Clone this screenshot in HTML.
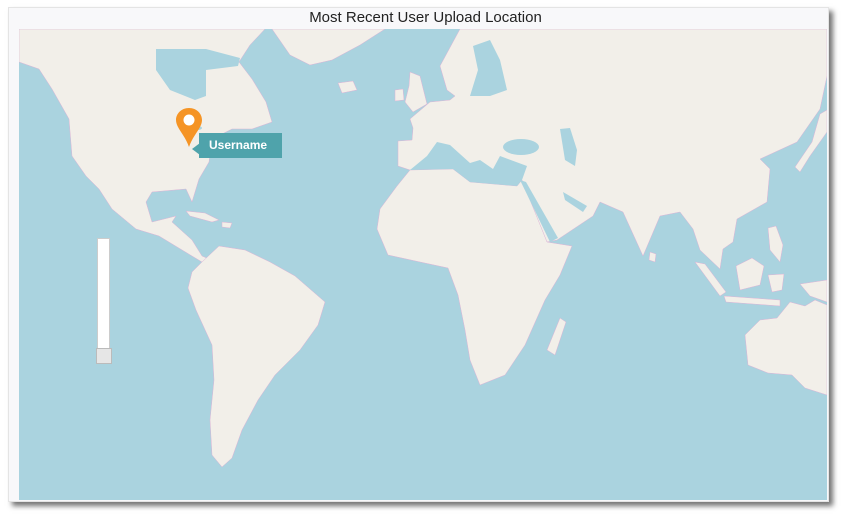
<!DOCTYPE html>
<html><head><style>
body{margin:0;width:843px;height:517px;background:#fff;overflow:hidden;font-family:"Liberation Sans",sans-serif}
.panel{position:absolute;left:8px;top:7px;width:819px;height:493px;background:#f8f8fa;box-shadow:4px 4px 5px rgba(0,0,0,.55);border:1px solid #e4e4e4}
.title{position:absolute;left:8px;top:9px;width:835px;text-align:center;font-size:15px;color:#222}
svg{position:absolute;left:19px;top:29px}
</style></head><body>
<div class="panel"></div>
<div class="title">Most Recent User Upload Location</div>
<svg width="808" height="471" viewBox="19 29 808 471">
<rect x="19" y="29" width="808" height="471" fill="#aad3df"/>
<g fill="#f2efe9" stroke="#dcb3d6" stroke-width=".5">
<!-- North America -->
<path d="M19 29 L265 29 L250 45 L239 62 L252 79 L266 102 L272 122 L252 129 L232 129 L212 139 L209 162 L199 179 L192 202 L186 189 L152 192 L146 202 L152 222 L176 216 L172 222 L192 240 L202 256 L209 259 L202 262 L192 256 L159 236 L136 229 L112 209 L99 189 L86 176 L72 156 L69 119 L52 89 L39 69 L19 62 Z"/>
<path d="M186 211 L205 213 L219 220 L212 222 L190 216 Z"/>
<path d="M222 222 L232 223 L230 228 L222 227 Z"/>
<!-- Greenland -->
<path d="M272 29 L385 29 L360 45 L332 60 L310 65 L290 55 Z"/>
<path d="M338 83 L353 81 L357 90 L342 93 Z"/>
<!-- South America -->
<path d="M202 262 L219 246 L245 250 L270 262 L295 276 L325 302 L318 325 L300 350 L275 375 L258 400 L242 430 L232 458 L222 467 L212 455 L210 420 L214 380 L212 345 L196 310 L188 288 L192 272 Z"/>
<!-- Eurasia -->
<path d="M460 29 L440 66 L447 90 L455 96 L450 100 L430 102 L410 119 L413 128 L412 140 L398 141 L398 166 L410 170 L525 170 L520 182 L547 242 L557 240 L593 216 L600 202 L623 212 L643 256 L660 216 L680 212 L693 229 L700 250 L720 269 L723 249 L733 242 L737 219 L767 202 L770 169 L760 159 L797 142 L820 109 L827 76 L827 29 Z"/>
<!-- Britain / Ireland -->
<path d="M410 72 L420 76 L427 104 L413 112 L405 102 L409 86 Z"/>
<path d="M395 90 L403 89 L404 100 L395 101 Z"/>
<!-- Africa -->
<path d="M410 170 L453 169 L470 182 L517 186 L522 180 L547 242 L572 246 L560 275 L545 300 L525 345 L505 375 L480 385 L470 360 L465 330 L458 295 L448 268 L420 262 L388 255 L377 229 L380 209 L397 186 Z"/>
<path d="M560 318 L566 322 L555 355 L547 350 Z"/>
<!-- Asia islands -->
<path d="M795 167 L812 142 L820 114 L827 110 L827 132 L810 156 L800 172 Z"/>
<path d="M650 252 L656 254 L655 262 L649 260 Z"/>
<path d="M695 262 L705 264 L726 292 L720 296 Z"/>
<path d="M724 296 L780 300 L780 306 L726 302 Z"/>
<path d="M736 266 L752 258 L764 266 L760 285 L740 290 Z"/>
<path d="M768 228 L776 226 L783 245 L780 262 L770 250 Z"/>
<path d="M768 275 L784 274 L782 290 L772 292 Z"/>
<path d="M800 284 L827 280 L827 302 L810 296 Z"/>
<!-- Australia -->
<path d="M745 335 L760 320 L777 318 L790 302 L805 306 L815 300 L827 305 L827 395 L805 388 L792 375 L768 373 L748 365 Z"/>
</g>
<g fill="#aad3df">
<path d="M156 49 L206 49 L240 58 L238 66 L206 70 L206 96 L195 100 L170 90 L156 70 Z"/>
<path d="M410 170 L427 156 L437 142 L450 145 L470 163 L480 160 L493 169 L500 156 L527 166 L522 180 L517 186 L470 182 L453 169 Z"/>
<ellipse cx="521" cy="147" rx="18" ry="8"/>
<path d="M560 129 L570 128 L577 150 L575 166 L565 160 Z"/>
<path d="M473 46 L490 40 L500 60 L507 90 L490 96 L470 96 L478 70 Z"/>
<path d="M563 192 L587 206 L583 212 L565 200 Z"/>
<path d="M520 180 L526 182 L558 238 L550 242 Z"/>
<ellipse cx="183" cy="125" rx="5" ry="3"/>
<ellipse cx="198" cy="128" rx="4" ry="2"/>
</g>
</svg>
<!-- slider -->
<div style="position:absolute;left:97px;top:238px;width:11px;height:112px;background:#fff;border:1px solid #ccc"></div>
<div style="position:absolute;left:96px;top:348px;width:14px;height:14px;background:#e6e6e6;border:1px solid #bbb"></div>
<!-- marker -->
<svg style="position:absolute;left:175px;top:107px" width="28" height="42" viewBox="0 0 28 42">
<path d="M14 1 C6 1 1 7 1 13 C1 21 10 28 14 40 C18 28 27 21 27 13 C27 7 22 1 14 1 Z" fill="#f59425"/>
<circle cx="14" cy="13" r="5.5" fill="#fff"/>
</svg>
<div style="position:absolute;left:192px;top:143px;width:0;height:0;border-top:6px solid transparent;border-bottom:6px solid transparent;border-right:8px solid #4fa3ab"></div>
<div style="position:absolute;left:199px;top:133px;width:83px;height:25px;background:#4fa3ab;color:#fff;font-weight:bold;font-size:12px;line-height:25px;padding-left:10px;box-sizing:border-box">Username</div>
</body></html>
